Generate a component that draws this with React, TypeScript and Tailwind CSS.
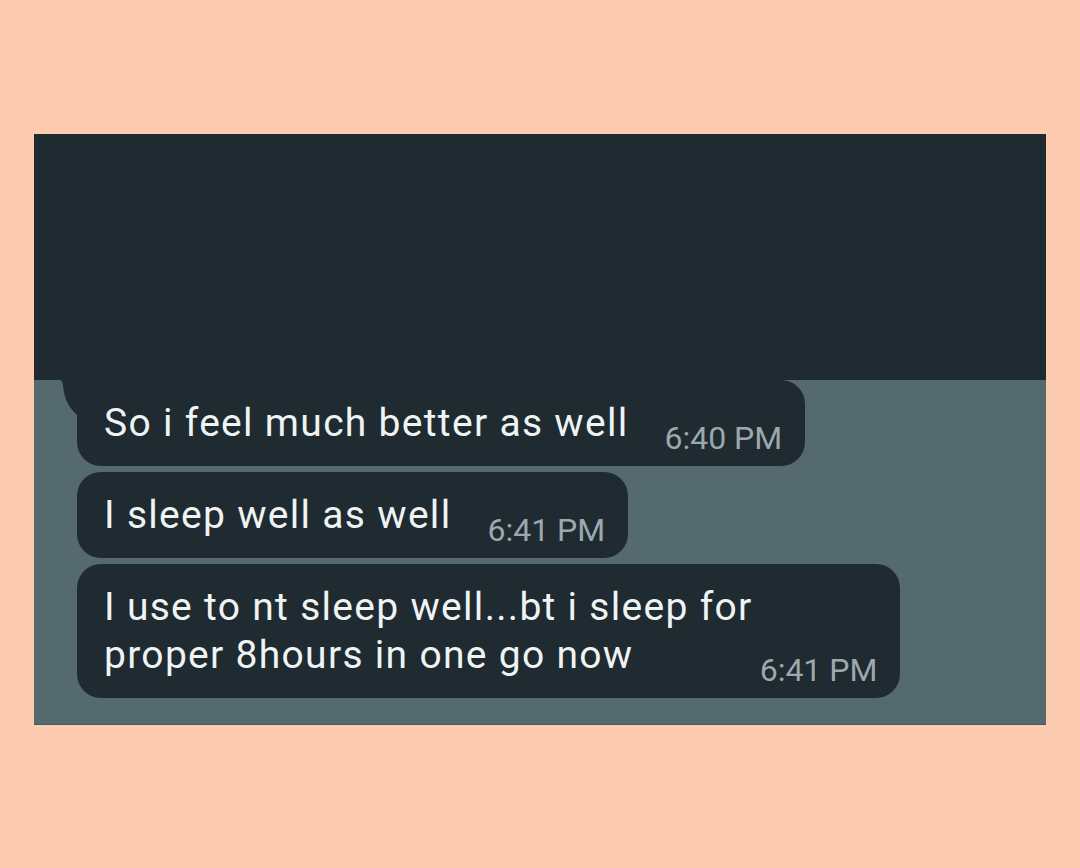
const messages = [
  { id: "1", lines: ["So i feel much better as well"], time: "6:40 PM", tail: true, gap: "ml-[36px]" },
  { id: "2", lines: ["I sleep well as well"], time: "6:41 PM", tail: false, gap: "ml-[36px]" },
  { id: "3", lines: ["I use to nt sleep well...bt i sleep for", "proper 8hours in one go now"], time: "6:41 PM", tail: false, gap: "ml-[7px]" },
];

const Bubble = ({ lines, time, tail, gap }: { lines: string[]; time: string; tail: boolean; gap: string }) => (
  <div
    className={`relative flex items-end bg-[#1f2a31] pl-[27px] pr-[23px] pt-[19px] pb-[12px] rounded-[24px] ${
      tail ? "rounded-tl-none" : ""
    }`}
  >
    {tail && (
      <svg className="absolute left-[-17px] top-0" width="18" height="36" viewBox="0 0 18 36">
        <path d="M18 0 H0 C3 1 3 6 4 12 C6 24 12 30 18 36 Z" fill="#1f2a31" />
      </svg>
    )}
    <p className="text-[39px] leading-[48px] text-[#eef3f4] tracking-[1.3px] mb-[7px]">
      {lines.map((l, i) => (
        <span key={i} className="block whitespace-nowrap">
          {l}
        </span>
      ))}
    </p>
    <span className={`${gap} text-[32px] leading-[32px] text-[#9ba8ad] whitespace-nowrap`}>{time}</span>
  </div>
);

export default function App() {
  return (
    <div className="min-h-[868px] w-full bg-[#fdcbb0] pt-[134px] font-['Roboto','Liberation_Sans',sans-serif]">
      <div className="mx-[34px] h-[591px] flex flex-col bg-[#546a6c] border-b border-[#4a5a5c]">
        <div className="h-[246px] bg-[#1f2a31] shrink-0" />
        <div className="flex flex-col items-start gap-[6px] pl-[43px]">
          {messages.map((m) => (
            <Bubble key={m.id} lines={m.lines} time={m.time} tail={m.tail} gap={m.gap} />
          ))}
        </div>
      </div>
    </div>
  );
}
